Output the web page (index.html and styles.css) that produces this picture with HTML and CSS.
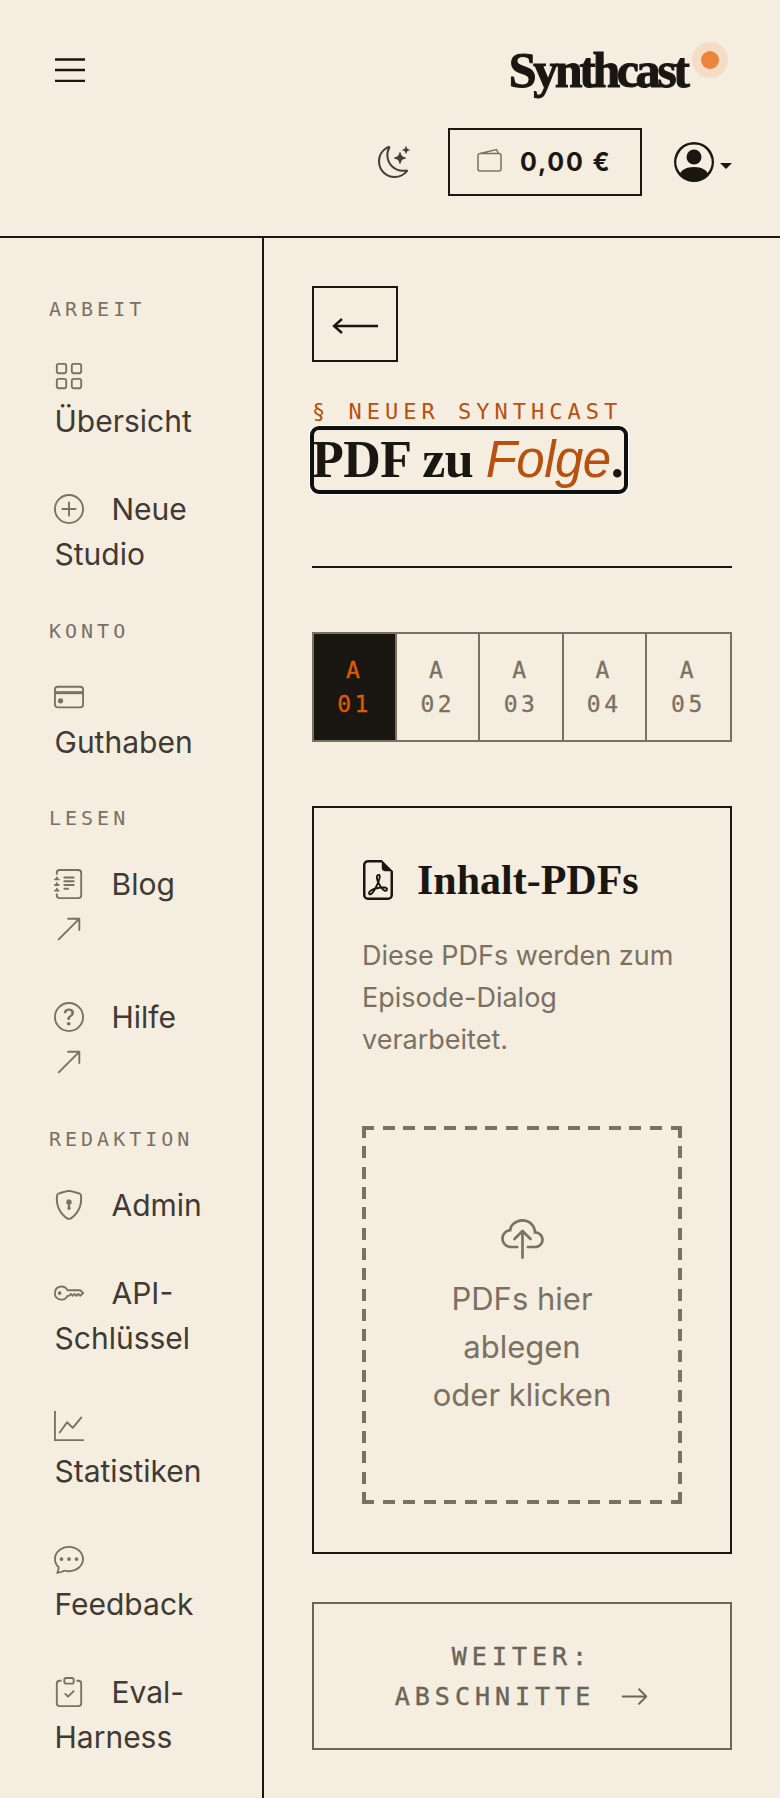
FILE: index.html
```html
<!DOCTYPE html>
<html lang="de">
<head>
  <meta charset="utf-8" />
  <meta name="viewport" content="width=device-width,initial-scale=1" />
  <title>Synthcast – Neuer Synthcast</title>
  <link rel="stylesheet" href="styles.css">
</head>
<body>
  <header class="top">
    <div class="top-row">
      <svg class="burger" viewBox="0 0 30 24" aria-hidden="true"><path d="M0 1.5h30M0 12h30M0 23h30"/></svg>
      <div class="logo">Synthcast<span class="logo-dot"></span></div>
    </div>
    <div class="actions">
      <svg class="moon" viewBox="0 0 16 16" aria-hidden="true"><path d="M6 .278a.77.77 0 0 1 .08.858 7.2 7.2 0 0 0-.878 3.46c0 4.021 3.278 7.277 7.318 7.277q.792-.001 1.533-.16a.79.79 0 0 1 .81.316.73.73 0 0 1-.031.893A8.35 8.35 0 0 1 8.344 16C3.734 16 0 12.286 0 7.71 0 4.266 2.114 1.312 5.124.06A.75.75 0 0 1 6 .278M4.858 1.311A7.27 7.27 0 0 0 1.025 7.71c0 4.02 3.279 7.276 7.319 7.276a7.32 7.32 0 0 0 5.205-2.162q-.506.063-1.029.063c-4.61 0-8.343-3.714-8.343-8.29 0-1.167.242-2.278.681-3.286"/><path d="M10.794 3.148a.217.217 0 0 1 .412 0l.387 1.162c.173.518.579.924 1.097 1.097l1.162.387a.217.217 0 0 1 0 .412l-1.162.387a1.73 1.73 0 0 0-1.097 1.097l-.387 1.162a.217.217 0 0 1-.412 0l-.387-1.162A1.73 1.73 0 0 0 9.31 6.593l-1.162-.387a.217.217 0 0 1 0-.412l1.162-.387a1.73 1.73 0 0 0 1.097-1.097zM13.863.099a.145.145 0 0 1 .274 0l.258.774c.115.346.386.617.732.732l.774.258a.145.145 0 0 1 0 .274l-.774.258a1.16 1.16 0 0 0-.732.732l-.258.774a.145.145 0 0 1-.274 0l-.258-.774a1.16 1.16 0 0 0-.732-.732l-.774-.258a.145.145 0 0 1 0-.274l.774-.258c.346-.115.617-.386.732-.732z"/></svg>
      <a class="balance" href="#">
        <svg class="wallet" viewBox="0 0 25 24" aria-hidden="true"><path d="M3 5.500 19.500 1.500 21.500 5.500M1 7.500a2 2 0 0 1 2-2h19a2 2 0 0 1 2 2V21a2 2 0 0 1-2 2H3a2 2 0 0 1-2-2z"/></svg>
        <span>0,00 €</span>
      </a>
      <div class="account">
        <svg class="person" viewBox="0 0 16 16" aria-hidden="true"><path d="M11 6a3 3 0 1 1-6 0 3 3 0 0 1 6 0"/><path fill-rule="evenodd" d="M0 8a8 8 0 1 1 16 0A8 8 0 0 1 0 8m8-7a7 7 0 0 0-5.468 11.37C3.242 11.226 4.805 10 8 10s4.757 1.225 5.468 2.37A7 7 0 0 0 8 1"/></svg>
        <span class="caret"></span>
      </div>
    </div>
  </header>

  <div class="layout">
    <nav class="side">
      <div class="side-label first">ARBEIT</div>
      <a class="side-item" href="#"><svg class="ico" viewBox="0 0 16 16"><path d="M1 2.500A1.500 1.500 0 0 1 2.500 1h3A1.500 1.500 0 0 1 7 2.500v3A1.500 1.500 0 0 1 5.500 7h-3A1.500 1.500 0 0 1 1 5.500zM2.500 2a.5.5 0 0 0-.5.5v3a.5.5 0 0 0 .5.5h3a.5.5 0 0 0 .5-.5v-3a.5.5 0 0 0-.5-.5zm6.500.5A1.500 1.500 0 0 1 10.500 1h3A1.500 1.500 0 0 1 15 2.500v3A1.500 1.500 0 0 1 13.500 7h-3A1.500 1.500 0 0 1 9 5.500zm1.500-.5a.5.5 0 0 0-.5.5v3a.5.5 0 0 0 .5.5h3a.5.5 0 0 0 .5-.5v-3a.5.5 0 0 0-.5-.5zM1 10.500A1.500 1.500 0 0 1 2.500 9h3A1.500 1.500 0 0 1 7 10.500v3A1.500 1.500 0 0 1 5.500 15h-3A1.500 1.500 0 0 1 1 13.500zm1.500-.5a.5.5 0 0 0-.5.5v3a.5.5 0 0 0 .5.5h3a.5.5 0 0 0 .5-.5v-3a.5.5 0 0 0-.5-.5zm6.500.5A1.500 1.500 0 0 1 10.500 9h3a1.500 1.500 0 0 1 1.500 1.500v3a1.500 1.500 0 0 1-1.500 1.500h-3A1.500 1.500 0 0 1 9 13.500zm1.500-.5a.5.5 0 0 0-.5.5v3a.5.5 0 0 0 .5.5h3a.5.5 0 0 0 .5-.5v-3a.5.5 0 0 0-.5-.5z"/></svg>Übersicht</a>
      <a class="side-item" href="#"><svg class="ico" viewBox="0 0 16 16"><path d="M8 15A7 7 0 1 1 8 1a7 7 0 0 1 0 14m0 1A8 8 0 1 0 8 0a8 8 0 0 0 0 16"/><path d="M8 4a.5.5 0 0 1 .5.5v3h3a.5.5 0 0 1 0 1h-3v3a.5.5 0 0 1-1 0v-3h-3a.5.5 0 0 1 0-1h3v-3A.5.5 0 0 1 8 4"/></svg>Neue Studio</a>

      <div class="side-label">KONTO</div>
      <a class="side-item" href="#"><svg class="ico" viewBox="0 0 16 16"><path d="M0 4a2 2 0 0 1 2-2h12a2 2 0 0 1 2 2v8a2 2 0 0 1-2 2H2a2 2 0 0 1-2-2zm2-1a1 1 0 0 0-1 1v1h14V4a1 1 0 0 0-1-1zm13 3H1V12a1 1 0 0 0 1 1h12a1 1 0 0 0 1-1z"/><path d="M0 5h16v1.500H0z"/><circle cx="3.500" cy="10" r="1.400"/></svg>Guthaben</a>

      <div class="side-label">LESEN</div>
      <a class="side-item" href="#"><svg class="ico" viewBox="0 0 16 16"><path d="M5 10.500a.5.5 0 0 1 .5-.5h2a.5.5 0 0 1 0 1h-2a.5.5 0 0 1-.5-.5m0-2a.5.5 0 0 1 .5-.5h5a.5.5 0 0 1 0 1h-5a.5.5 0 0 1-.5-.5m0-2a.5.5 0 0 1 .5-.5h5a.5.5 0 0 1 0 1h-5a.5.5 0 0 1-.5-.5m0-2a.5.5 0 0 1 .5-.5h5a.5.5 0 0 1 0 1h-5a.5.5 0 0 1-.5-.5"/><path d="M3 0h10a2 2 0 0 1 2 2v12a2 2 0 0 1-2 2H3a2 2 0 0 1-2-2v-1h1v1a1 1 0 0 0 1 1h10a1 1 0 0 0 1-1V2a1 1 0 0 0-1-1H3a1 1 0 0 0-1 1v1H1V2a2 2 0 0 1 2-2"/><path d="M1 5v-.5a.5.5 0 0 1 1 0V5h.5a.5.5 0 0 1 0 1h-2a.5.5 0 0 1 0-1zm0 3v-.5a.5.5 0 0 1 1 0V8h.5a.5.5 0 0 1 0 1h-2a.5.5 0 0 1 0-1zm0 3v-.5a.5.5 0 0 1 1 0v.5h.5a.5.5 0 0 1 0 1h-2a.5.5 0 0 1 0-1z"/></svg>Blog <svg class="ico" viewBox="0 0 16 16"><path fill-rule="evenodd" d="M14 2.500a.5.5 0 0 0-.5-.5h-6a.5.5 0 0 0 0 1h4.793L2.146 13.146a.5.5 0 0 0 .708.708L13 3.707V8.500a.5.5 0 0 0 1 0z"/></svg></a>
      <a class="side-item" href="#"><svg class="ico" viewBox="0 0 16 16"><path d="M8 15A7 7 0 1 1 8 1a7 7 0 0 1 0 14m0 1A8 8 0 1 0 8 0a8 8 0 0 0 0 16"/><path d="M5.255 5.786a.237.237 0 0 0 .241.247h.825c.138 0 .248-.113.266-.25.09-.656.54-1.134 1.342-1.134.686 0 1.314.343 1.314 1.168 0 .635-.374.927-.965 1.371-.673.489-1.206 1.060-1.168 1.987l.003.217a.25.25 0 0 0 .25.246h.811a.25.25 0 0 0 .25-.25v-.105c0-.718.273-.927 1.010-1.486.609-.463 1.244-.977 1.244-2.056 0-1.511-1.276-2.241-2.673-2.241-1.267 0-2.655.59-2.75 2.286m1.557 5.763c0 .533.425.927 1.010.927.609 0 1.028-.394 1.028-.927 0-.552-.42-.94-1.029-.94-.584 0-1.009.388-1.009.94"/></svg>Hilfe <svg class="ico" viewBox="0 0 16 16"><path fill-rule="evenodd" d="M14 2.500a.5.5 0 0 0-.5-.5h-6a.5.5 0 0 0 0 1h4.793L2.146 13.146a.5.5 0 0 0 .708.708L13 3.707V8.500a.5.5 0 0 0 1 0z"/></svg></a>

      <div class="side-label">REDAKTION</div>
      <a class="side-item" href="#"><svg class="ico" viewBox="0 0 16 16"><path d="M5.338 1.590a61 61 0 0 0-2.837.856.48.48 0 0 0-.328.39c-.554 4.157.726 7.19 2.253 9.188a10.700 10.700 0 0 0 2.287 2.233c.346.244.652.42.893.533q.18.085.293.118a1 1 0 0 0 .101.025 1 1 0 0 0 .1-.025q.114-.034.294-.118c.24-.113.547-.29.893-.533a10.700 10.700 0 0 0 2.287-2.233c1.527-1.997 2.807-5.031 2.253-9.188a.48.48 0 0 0-.328-.39c-.651-.213-1.750-.56-2.837-.855C9.552 1.290 8.531 1.067 8 1.067c-.53 0-1.552.223-2.662.524zM5.072.56C6.157.265 7.310 0 8 0s1.843.265 2.928.56c1.110.3 2.229.655 2.887.87a1.540 1.540 0 0 1 1.044 1.262c.596 4.477-.787 7.795-2.465 9.990a11.800 11.800 0 0 1-2.517 2.453 7 7 0 0 1-1.048.625c-.28.132-.581.24-.829.24s-.548-.108-.829-.24a7 7 0 0 1-1.048-.625 11.800 11.800 0 0 1-2.517-2.453C1.928 10.487.545 7.169 1.141 2.692A1.540 1.540 0 0 1 2.185 1.430 63 63 0 0 1 5.072.56"/><path d="M9.500 6.500a1.500 1.500 0 0 1-1 1.415l.385 1.990a.5.5 0 0 1-.491.595h-.788a.5.5 0 0 1-.49-.595l.384-1.990a1.500 1.500 0 1 1 2-1.415"/></svg>Admin</a>
      <a class="side-item" href="#"><svg class="ico" viewBox="0 0 16 16"><path d="M0 8a4 4 0 0 1 7.465-2H14a.5.5 0 0 1 .354.146l1.500 1.500a.5.5 0 0 1 0 .708l-1.500 1.500a.5.5 0 0 1-.708 0L13 9.207l-.646.647a.5.5 0 0 1-.708 0L11 9.207l-.646.647a.5.5 0 0 1-.708 0L9 9.207l-.646.647A.5.5 0 0 1 8 10h-.535A4 4 0 0 1 0 8m4-3a3 3 0 1 0 2.712 4.285A.5.5 0 0 1 7.163 9h.63l.853-.854a.5.5 0 0 1 .708 0l.646.647.646-.647a.5.5 0 0 1 .708 0l.646.647.646-.647a.5.5 0 0 1 .708 0l.646.647.793-.793-1-1h-6.630a.5.5 0 0 1-.451-.285A3 3 0 0 0 4 5"/><path d="M4 8a1 1 0 1 1-2 0 1 1 0 0 1 2 0"/></svg>API-Schlüssel</a>
      <a class="side-item" href="#"><svg class="ico" viewBox="0 0 16 16"><path fill-rule="evenodd" d="M0 0h1v15h15v1H0zm14.817 3.113a.5.5 0 0 1 .07.704l-4.500 5.500a.5.5 0 0 1-.74.037L7.060 6.767l-3.656 5.027a.5.5 0 0 1-.808-.588l4-5.500a.5.5 0 0 1 .758-.06l2.609 2.610 4.150-5.073a.5.5 0 0 1 .704-.07"/></svg>Statistiken</a>
      <a class="side-item" href="#"><svg class="ico" viewBox="0 0 16 16"><path d="M5 8a1 1 0 1 1-2 0 1 1 0 0 1 2 0m4 0a1 1 0 1 1-2 0 1 1 0 0 1 2 0m3 1a1 1 0 1 0 0-2 1 1 0 0 0 0 2"/><path d="m2.165 15.803.02-.004c1.830-.363 2.948-.842 3.468-1.105A9 9 0 0 0 8 15c4.418 0 8-3.134 8-7s-3.582-7-8-7-8 3.134-8 7c0 1.760.743 3.370 1.970 4.600a10.400 10.400 0 0 1-.524 2.318l-.003.011a11 11 0 0 1-.244.637c-.079.186.074.394.273.362a22 22 0 0 0 .693-.125m.8-3.108a1 1 0 0 0-.287-.801C1.618 10.830 1 9.468 1 8c0-3.192 3.004-6 7-6s7 2.808 7 6-3.004 6-7 6a8 8 0 0 1-2.088-.272 1 1 0 0 0-.711.074c-.387.196-1.240.57-2.634.893a11 11 0 0 0 .398-2"/></svg>Feedback</a>
      <a class="side-item" href="#"><svg class="ico" viewBox="0 0 16 16"><path fill-rule="evenodd" d="M10.854 7.146a.5.5 0 0 1 0 .708l-3 3a.5.5 0 0 1-.708 0l-1.500-1.500a.5.5 0 1 1 .708-.708L7.500 9.793l2.646-2.647a.5.5 0 0 1 .708 0"/><path d="M4 1.500H3a2 2 0 0 0-2 2V14a2 2 0 0 0 2 2h10a2 2 0 0 0 2-2V3.500a2 2 0 0 0-2-2h-1v1h1a1 1 0 0 1 1 1V14a1 1 0 0 1-1 1H3a1 1 0 0 1-1-1V3.500a1 1 0 0 1 1-1h1z"/><path d="M9.500 1a.5.5 0 0 1 .5.5v1a.5.5 0 0 1-.5.5h-3a.5.5 0 0 1-.5-.5v-1a.5.5 0 0 1 .5-.5zm-3-1A1.500 1.500 0 0 0 5 1.500v1A1.500 1.500 0 0 0 6.500 4h3A1.500 1.500 0 0 0 11 2.500v-1A1.500 1.500 0 0 0 9.500 0z"/></svg>Eval-Harness</a>
    </nav>

    <main class="main">
      <a class="back" href="#"><svg class="back-arrow" viewBox="0 0 46 18" aria-hidden="true"><path d="M46 9H2M10 2 2 9l8 7"/></svg></a>
      <div class="eyebrow">§ NEUER SYNTHCAST</div>
      <h1 class="title">PDF zu <em>Folge</em>.</h1>
      <div class="rule"></div>

      <div class="steps">
        <div class="step active">A<br>01</div>
        <div class="step">A<br>02</div>
        <div class="step">A<br>03</div>
        <div class="step">A<br>04</div>
        <div class="step">A<br>05</div>
      </div>

      <section class="card">
        <h2 class="card-title">
          <svg class="pdf" viewBox="0 0 16 16" aria-hidden="true"><path d="M14 14V4.500L9.500 0H4a2 2 0 0 0-2 2v12a2 2 0 0 0 2 2h8a2 2 0 0 0 2-2M9.500 3A1.500 1.500 0 0 0 11 4.500h2V14a1 1 0 0 1-1 1H4a1 1 0 0 1-1-1V2a1 1 0 0 1 1-1h5.500z"/><path d="M4.603 14.087a.8.8 0 0 1-.438-.42c-.195-.388-.13-.776.08-1.102.198-.307.526-.568.897-.787a7.700 7.700 0 0 1 1.482-.645 20 20 0 0 0 1.062-2.227 7.300 7.300 0 0 1-.43-1.295c-.086-.4-.119-.796-.046-1.136.075-.354.274-.672.65-.823.192-.077.4-.12.602-.077a.7.7 0 0 1 .477.365c.088.164.12.356.127.538.007.188-.012.396-.047.614-.084.51-.27 1.134-.52 1.794a11 11 0 0 0 .98 1.686 5.800 5.800 0 0 1 1.334.05c.364.066.734.195.96.465.12.144.193.32.2.518.007.192-.047.382-.138.563a1.040 1.040 0 0 1-.354.416.86.86 0 0 1-.51.138c-.331-.014-.654-.196-.933-.417a5.700 5.700 0 0 1-.911-.95 11.700 11.700 0 0 0-1.997.406 11.300 11.300 0 0 1-1.020 1.510c-.292.35-.609.656-.927.787a.8.8 0 0 1-.58.029m1.379-1.901q-.25.115-.459.238c-.328.194-.541.383-.647.547-.094.145-.096.25-.04.361q.016.032.026.044l.035-.012c.137-.056.355-.235.635-.572a8 8 0 0 0 .45-.606m1.640-1.330a13 13 0 0 1 1.010-.193 12 12 0 0 1-.51-.858 21 21 0 0 1-.5 1.050zm2.446.45q.226.245.435.41c.24.19.407.253.498.256a.1.1 0 0 0 .07-.015.3.3 0 0 0 .094-.125.44.44 0 0 0 .059-.2.1.1 0 0 0-.026-.063c-.052-.062-.2-.152-.518-.209a4 4 0 0 0-.612-.053zM8.078 7.800a7 7 0 0 0 .2-.828q.046-.282.038-.465a.6.6 0 0 0-.032-.198.5.5 0 0 0-.145.04c-.087.035-.158.106-.196.283-.04.192-.03.469.046.822q.036.167.09.346z"/></svg>
          Inhalt-PDFs
        </h2>
        <p class="card-text">Diese PDFs werden zum Episode-Dialog verarbeitet.</p>
        <div class="drop">
          <svg class="cloud" viewBox="0 0 16 15" aria-hidden="true"><path fill-rule="evenodd" d="M4.406 1.342A5.530 5.530 0 0 1 8 0c2.690 0 4.923 2 5.166 4.579C14.758 4.804 16 6.137 16 7.773 16 9.569 14.502 11 12.687 11H10a.5.5 0 0 1 0-1h2.688C13.979 10 15 8.988 15 7.773c0-1.216-1.020-2.228-2.313-2.228h-.5v-.5C12.188 2.825 10.328 1 8 1a4.530 4.530 0 0 0-2.941 1.100c-.757.652-1.153 1.438-1.153 2.055v.448l-.445.049C2.064 4.805 1 5.952 1 7.318 1 8.785 2.230 10 3.781 10H6a.5.5 0 0 1 0 1H3.781C1.708 11 0 9.366 0 7.318c0-1.763 1.266-3.223 2.942-3.593.143-.863.698-1.723 1.464-2.383"/><path d="M7.646 4.146a.5.5 0 0 1 .708 0l3 3a.5.5 0 0 1-.708.708L8.500 5.707V14.500a.5.5 0 0 1-1 0V5.707L5.354 7.854a.5.5 0 1 1-.708-.708z"/></svg>
          <div>PDFs hier ablegen oder klicken</div>
        </div>
      </section>

      <a class="next" href="#">WEITER: ABSCHNITTE<svg class="next-arrow" viewBox="0 0 16 16" aria-hidden="true"><path fill-rule="evenodd" d="M1 8a.5.5 0 0 1 .5-.5h11.793l-3.147-3.146a.5.5 0 0 1 .708-.708l4 4a.5.5 0 0 1 0 .708l-4 4a.5.5 0 0 1-.708-.708L13.293 8.500H1.500A.5.5 0 0 1 1 8"/></svg></a>
    </main>
  </div>
</body>
</html>
```

FILE: styles.css
```css
:root {
  --paper:#f5eddf; --ink:#1a1712; --text:#3f3a33; --muted:#7a7163; --rust:#b8500f; --orange:#e05a00;
  --sans:Inter,'Liberation Sans',sans-serif; --serif:'Liberation Serif','Times New Roman',serif; --mono:'DejaVu Sans Mono',monospace;
}
*{box-sizing:border-box;margin:0;padding:0}
html,body{height:100%}
body{background:var(--paper);color:var(--ink);font-family:var(--sans);min-height:1798px}
a{color:inherit;text-decoration:none}

/* header */
.top{height:238px;border-bottom:2px solid var(--ink);padding:0 48px 0 55px}
.top-row{display:flex;justify-content:space-between;align-items:flex-start;height:128px}
.burger{width:30px;height:24px;margin-top:58px;fill:none;stroke:var(--ink);stroke-width:2.6}
.logo{position:relative;margin:40px 45.5px 0 0;font:700 50px/60px var(--serif);letter-spacing:-3.4px;-webkit-text-stroke:1px var(--ink)}
.logo-dot{position:absolute;left:calc(100% + 5px);top:2px;width:36px;height:36px;border-radius:50%;background:#f5dcc6}
.logo-dot::after{content:'';position:absolute;left:9px;top:9px;width:18px;height:18px;border-radius:50%;background:#ee833d}
.actions{display:flex;justify-content:flex-end;align-items:center}
.moon{width:32px;height:32px;margin-right:38px;fill:#444038}
.balance{display:flex;align-items:center;gap:18px;width:194px;height:68px;border:2px solid var(--ink);padding:0 0 1px 27px;font-weight:700;font-size:25px;letter-spacing:1.800px}
.wallet{width:25px;height:24px;margin-top:-3px;fill:none;stroke:var(--muted);stroke-width:1.5}
.account{display:flex;align-items:flex-end;margin-left:32px}
.person{width:40px;height:40px;fill:var(--ink)}
.caret{width:0;height:0;margin:0 0 13px 6px;border:6px solid transparent;border-top-color:var(--ink);border-bottom:0}

/* sidebar + main */
.layout{display:flex;min-height:1560px}
.side{width:264px;flex:none;border-right:2px solid var(--ink);padding:0 44px 0 49px}
.side-label{font:400 20px/24px var(--mono);letter-spacing:4px;color:var(--muted);margin:20px 0 10.5px}
.side-label.first{margin:59px 0 11.5px}
.side-item{display:block;padding:21.5px 0 21.5px 5.5px;font-size:30px;line-height:45px;color:var(--text)}
.ico{width:30px;height:30px;margin:0 28px 0 -1px;vertical-align:-4px;fill:var(--muted)}

.main{flex:1;min-width:0;padding:48px 48px 0}
.back{display:flex;align-items:center;justify-content:center;width:86px;height:76px;border:2px solid var(--ink);padding-top:3px}
.back-arrow{width:46px;height:18px;fill:none;stroke:var(--ink);stroke-width:2.400}
.eyebrow{margin-top:36px;font:400 22px/28px var(--mono);letter-spacing:5px;color:var(--rust)}
.title{display:inline-block;margin-top:2px;padding-right:3px;font:700 52px/64px var(--serif);letter-spacing:-.5px;outline:4px solid #0f0f0f;outline-offset:-2px;border-radius:7px;box-shadow:0 0 0 3px #fff;vertical-align:top}
.title em{font:italic 400 51px/64px 'Liberation Sans',sans-serif;color:var(--rust)}
.rule{margin-top:74px;border-top:2px solid var(--ink)}

.steps{display:grid;grid-template-columns:repeat(5,1fr);height:110px;margin-top:64px;border:2px solid var(--muted)}
.step{border-right:2px solid var(--muted);font:400 23px/34px var(--mono);letter-spacing:3.5px;color:var(--muted);text-align:center;padding-top:19px;-webkit-text-stroke:.3px currentColor}
.step:last-child{border-right:0}
.step.active{background:var(--ink);color:var(--orange)}

.card{margin-top:64px;border:2px solid var(--ink);padding:48px}
.card-title{display:flex;align-items:center;gap:22px;height:48px;font:700 42px/48px var(--serif)}
.pdf{width:40px;height:40px;fill:var(--ink);margin-left:-4px;margin-right:-3px}
.card-text{margin-top:31px;font-size:27px;line-height:42px;color:var(--muted)}
.drop{display:flex;flex-direction:column;align-items:center;margin-top:65px;height:378px;padding:93px 70px 0;font-size:31px;line-height:48px;color:var(--muted);text-align:center;
  background:
    repeating-linear-gradient(90deg,var(--muted) 0 12px,transparent 12px 20.57px) top/100% 4px no-repeat,
    repeating-linear-gradient(90deg,var(--muted) 0 12px,transparent 12px 20.57px) bottom/100% 4px no-repeat,
    repeating-linear-gradient(180deg,var(--muted) 0 12px,transparent 12px 20.33px) left/4px 100% no-repeat,
    repeating-linear-gradient(180deg,var(--muted) 0 12px,transparent 12px 20.33px) right/4px 100% no-repeat}
.cloud{width:43px;height:40px;fill:var(--muted);margin-bottom:16px}

.next{display:block;margin-top:48px;padding:33px 48px 31px;border:2px solid #6b6457;font:400 25px/40px var(--mono);letter-spacing:5px;color:#6b6457;text-align:center;-webkit-text-stroke:.4px #6b6457}
.next-arrow{width:29px;height:29px;margin-left:25px;vertical-align:-6px;fill:#6b6457}
```
